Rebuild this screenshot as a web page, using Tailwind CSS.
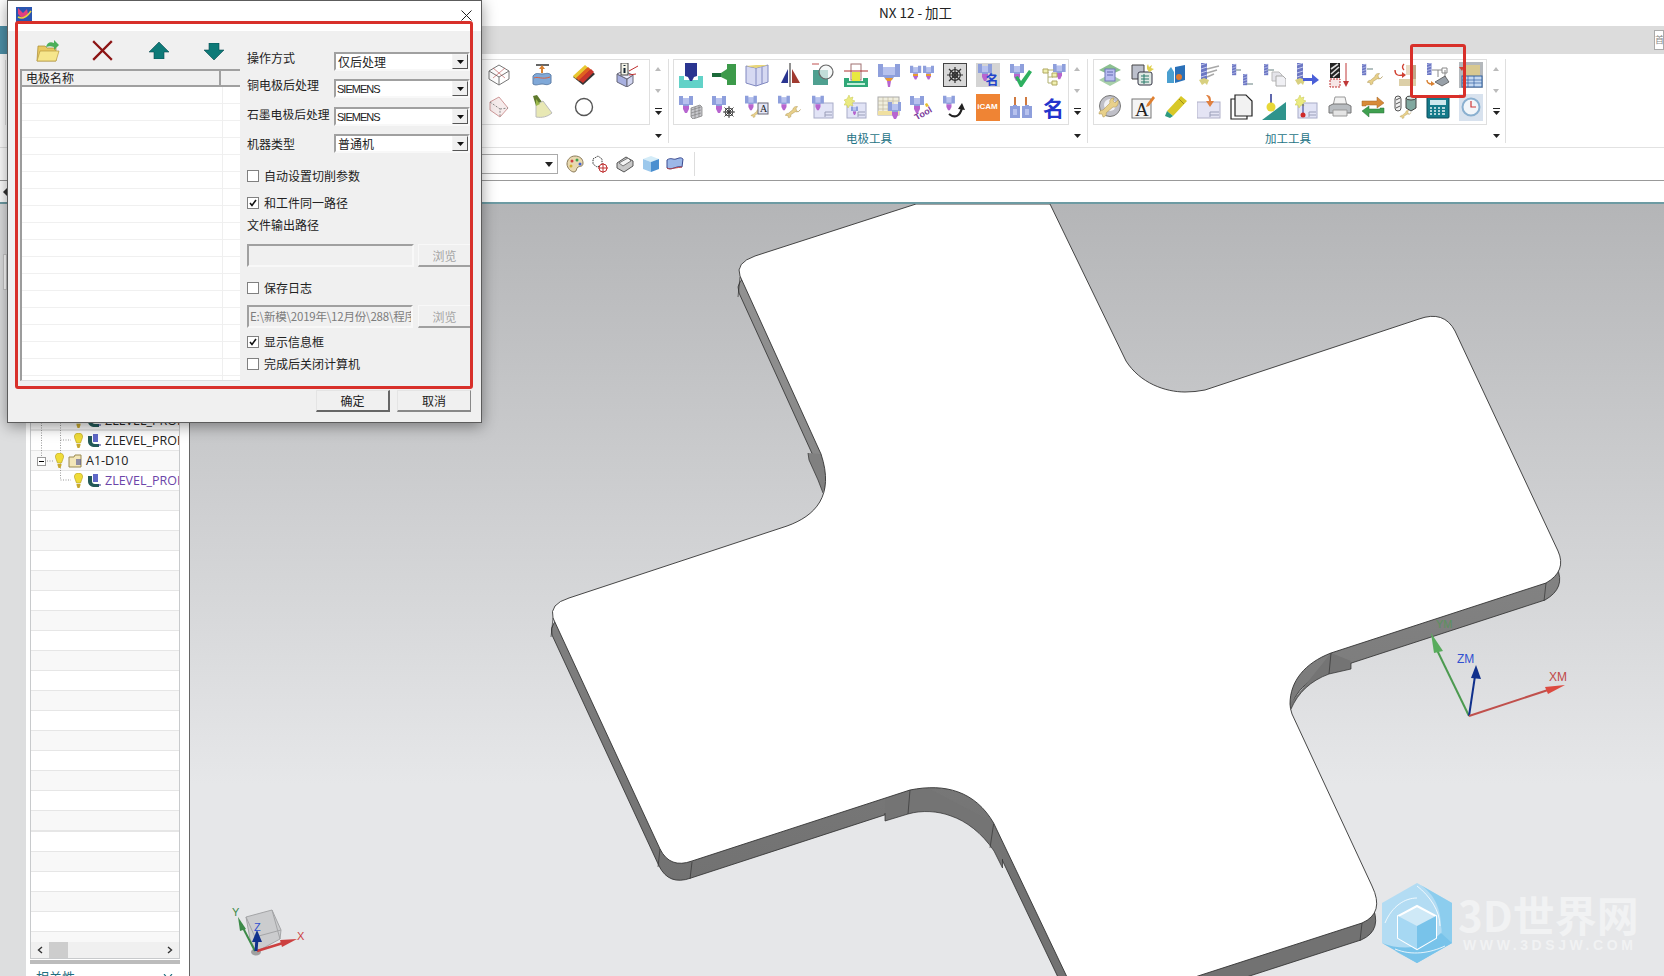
<!DOCTYPE html>
<html lang="zh">
<head>
<meta charset="utf-8">
<title>NX 12 - 加工</title>
<script src="https://cdn.jsdelivr.net/npm/@tailwindcss/browser@4"></script>
</head>
<body class="w-[1664px] h-[976px] overflow-hidden relative bg-white text-[#222] text-[12px] [font-family:'Noto_Sans_CJK_SC',sans-serif]">

<svg class="absolute w-0 h-0">
<defs>
<g id="e"><path d="M0 1h4v2h6V1h4v9h-4v1H4v-1H0z" fill="#8e9fdc"/><path d="M4 3h6v6H4z" fill="#b7c2ee"/><path d="M4 11h6v3l-2 4H6l-2-4z" fill="#b765cf"/></g>
<g id="w"><path d="M22 10l-3 3-2-1-1-3 2-3c-3-.5-6 1-6 4l-6 5c-3 0-4 2-4 3l3 0 1 3c2 0 4-1 3-4l6-4c3 1 6-1 7-3z" fill="#e8d08a" stroke="#a89050" stroke-width=".6"/></g>
<g id="web" fill="none" stroke="#333" stroke-width=".9"><path d="M0 6h12M6 0v12M1.500 1.500l9 9M10.500 1.500l-9 9"/><circle cx="6" cy="6" r="2"/><circle cx="6" cy="6" r="4"/></g>
<g id="m"><rect x="0" y="0" width="6" height="16" fill="#6d78c4"/><path d="M0 2l6-2M0 6l6-2M0 10l6-2M0 14l6-2" stroke="#c4caee" stroke-width="1"/></g>
<g id="pl"><rect x="0" y="0" width="19" height="15" fill="#e2e4f6" stroke="#a8acc8"/><path d="M11 9h7M11 12h7M11 9v5" stroke="#9a9eb8" fill="none"/></g>
<g id="up"><path d="M0 4l3-4 3 4z" fill="#bbb"/></g>
<g id="bulb"><path d="M4.500 0C7.500 0 9 2 8.500 4.500L6.500 10h-4L.5 4.500C0 2 1.500 0 4.500 0z" fill="#f0dc38" stroke="#b09a20" stroke-width=".6"/><path d="M2.500 11h4v1l-1 3h-2l-1-3z" fill="#c8a830"/></g>
<g id="op"><path d="M1 3v5c0 4 3 6 7 6h4v-3H8c-2 0-3-1-3-3V3z" fill="#235a58"/><rect x="6" y="1" width="5" height="8" fill="#5f68c8"/><path d="M11 12h3" stroke="#2a3590"/></g>
</defs>
</svg>

<!-- title bar -->
<div class="h-[26px] flex items-start justify-center pl-[167px] pt-[2px] text-[13.500px] leading-[20px] text-[#222]">NX 12 - 加工</div>
<!-- tab strip -->
<div class="h-[28px] bg-[#dcdcdc] flex justify-between">
  <div class="w-[60px] bg-[#4d90a8]"></div>
  <div class="w-[10px] h-[20px] mt-[4px] bg-white border border-[#aaa] text-[9px] leading-[18px] text-[#888] overflow-hidden">首</div>
</div>

<!-- ribbon -->
<div class="flex h-[93px] border-b border-[#e2e2e2] box-content">
  <div class="w-[440px]"></div>
  <!-- group 1 -->
  <div class="w-[210px] pt-[5px]">
    <div class="h-[66px] border border-[#dfdfdf] pl-[37px] grid grid-cols-[repeat(4,42.6px)] grid-rows-[30px_34px] place-items-center">
      <svg class="w-[24px] h-[24px]" viewBox="0 0 24 24" fill="none" stroke="#777" stroke-width="1"><path d="M12 2l10 6v8l-10 6-10-6V8z"/><path d="M2 8l10 6 10-6M12 14v8"/><path d="M6 5l12 10M18 5L6 15" stroke="#b85050" stroke-width=".6"/></svg>
      <svg class="w-[24px] h-[24px]" viewBox="0 0 24 24"><path d="M3 13c3-4 6-2 9-2s6-2 9 1l0 8c-4 3-6 1-9 1s-6 2-9 0z" fill="#7fa8d8" stroke="#5f7fa8"/><path d="M4 15c4-2 8 2 16-1" stroke="#d86040" fill="none"/><path d="M6 1h13v2H6z" fill="#666"/><path d="M12 10V4" stroke="#d88030" stroke-width="2"/><path d="M9 6l3-4 3 4z" fill="#d88030"/></svg>
      <svg class="w-[24px] h-[24px]" viewBox="0 0 24 24"><path d="M1 14L13 3l10 8-12 11z" fill="#333"/><path d="M1 13L13 2l3 2.500L4 16z" fill="#e8c830"/><path d="M4 15L16 4l3 2.500L7 18z" fill="#e06020"/><path d="M7 17L19 6l3 3L11 20z" fill="#c8342c"/></svg>
      <svg class="w-[24px] h-[24px]" viewBox="0 0 24 24"><path d="M2 11l10 5v8l-10-5z" fill="#a8b0e0" stroke="#667"/><path d="M12 16l6-4v8l-6 4z" fill="#d0d4f0" stroke="#667"/><path d="M2 11l6-3 10 4-6 4z" fill="#eef" stroke="#667"/><rect x="6" y="0" width="7" height="12" fill="#f4f4e8" stroke="#444"/><path d="M9.500 2v1M9.500 5v5" stroke="#123" stroke-width="2"/><path d="M14 8l9-5M14 12l7-1" stroke="#c03030"/></svg>
      <svg class="w-[24px] h-[24px]" viewBox="0 0 24 24" fill="none" stroke="#d09a9a" stroke-width="1"><path d="M3 7l9-5 9 11-8 9-10-7z" fill="#f6ecec"/><path d="M3 7l10 7v8M13 14l8-1" stroke-dasharray="2 1.500" stroke="#888"/></svg>
      <svg class="w-[24px] h-[24px]" viewBox="0 0 24 24"><path d="M3 1l4-1 5 7-6 4z" fill="#5f7a2c"/><path d="M6 10l7-4 9 12c-5 4-10 5-16 4z" fill="#e8e8b4" stroke="#bbb"/><path d="M6 4l4 5-4 2z" fill="#9ab84a"/></svg>
      <svg class="w-[24px] h-[24px]" viewBox="0 0 24 24" fill="none"><circle cx="12" cy="12" r="8.500" stroke="#555" stroke-width="1.400"/></svg>
    </div>
  </div>
  <div class="w-[19px] mt-[5px] h-[84px] border-r border-[#dfdfdf] flex flex-col items-center pr-[2px]">
    <svg class="w-[6px] h-[4px] mt-[8px]" viewBox="0 0 6 4"><use href="#up"/></svg>
    <svg class="w-[6px] h-[4px] mt-[18px] rotate-180" viewBox="0 0 6 4"><use href="#up"/></svg>
    <svg class="w-[7px] h-[7px] mt-[15px]" viewBox="0 0 7 7"><path d="M0 0h7v1H0zM0 3h7L3.500 7z" fill="#222"/></svg>
    <svg class="w-[7px] h-[4px] mt-[19px]" viewBox="0 0 7 4"><path d="M0 0h7L3.500 4z" fill="#222"/></svg>
  </div>

  <!-- group 2 -->
  <div class="w-[396px] ml-[4px] pt-[5px]">
    <div class="h-[66px] border border-[#dfdfdf] grid grid-cols-[repeat(12,33px)] grid-rows-[30px_34px] place-items-center">
      <svg class="w-[24px] h-[25px]" viewBox="0 0 24 25"><path d="M0 13h5v4h14v-4h5v12H0z" fill="#62d2c8"/><path d="M6 0h12v13l-3 1-2 4h-2l-2-4-3-1z" fill="#2a3590"/></svg>
      <svg class="w-[24px] h-[24px]" viewBox="0 0 24 24"><path d="M0 10h9v4H0z" fill="#1c6a3a"/><path d="M9 10l6-4V1h9v21h-9v-5l-6-3z" fill="#3c9a4a"/></svg>
      <svg class="w-[24px] h-[24px]" viewBox="0 0 24 24"><path d="M1 3l10 2 12-3v17l-12 4-10-3z" fill="#d6d9f2" stroke="#8088c0"/><path d="M1 3l10-1 12 0-12 3z" fill="#e8d678"/><path d="M11 5v18M17 4v17" stroke="#8088c0" fill="none"/></svg>
      <svg class="w-[24px] h-[24px]" viewBox="0 0 24 24"><path d="M10 6v14H3z" fill="#2a3590"/><path d="M14 6v14h8z" fill="#a03a30"/><path d="M12 0v24" stroke="#222" stroke-width="1"/></svg>
      <svg class="w-[24px] h-[24px]" viewBox="0 0 24 24"><path d="M1 1h7" stroke="#c05050"/><rect x="2" y="7" width="15" height="15" fill="#4fa090"/><circle cx="15" cy="9" r="7" fill="#f2f6f6" fill-opacity=".7" stroke="#666" stroke-width="1.200"/></svg>
      <svg class="w-[24px] h-[24px]" viewBox="0 0 24 24"><rect x="7" y="1" width="10" height="16" fill="#fff" stroke="#a07070"/><rect x="8" y="9" width="8" height="9" fill="#e8e840"/><path d="M0 8h24" stroke="#b03030"/><path d="M0 15h5v3h14v-3h5v9H0z" fill="#30a878"/><path d="M3 20h18v2H3z" fill="#c0f0d8"/></svg>
      <svg class="w-[24px] h-[24px]" viewBox="0 0 24 24"><path d="M1 1h5v3h12V1h5v13h-6l-2 3H9l-2-3H1z" fill="#8e9fdc"/><path d="M6 4h12v8H6z" fill="#b7c2ee"/><path d="M8 15h8l-2 3h-4z" fill="#e89a30"/><path d="M10 18h4l-1 6h-2z" fill="#b765cf"/></svg>
      <svg class="w-[24px] h-[24px]" viewBox="0 0 24 24"><use href="#e" transform="translate(0,2) scale(.8)"/><use href="#e" transform="translate(13,2) scale(.8)"/><path d="M3 11h5v2H3zM16 11h5v2h-5z" fill="#e89a30"/></svg>
      <div class="w-[24px] h-[24px] bg-[#d8d8d8] border border-[#444] flex items-center justify-center"><svg class="w-[16px] h-[16px]" viewBox="0 0 12 12"><use href="#web"/></svg></div>
      <div class="w-[24px] h-[24px] bg-[#d4d4d4] relative"><svg class="absolute left-[2px] top-0 w-[16px] h-[18px]" viewBox="0 0 16 18"><use href="#e"/></svg><span class="absolute left-[10px] top-[9px] text-[13px] leading-[14px] font-bold text-[#2244cc]">名</span></div>
      <svg class="w-[24px] h-[24px]" viewBox="0 0 24 24"><use href="#e" transform="translate(1,0)"/><path d="M6 14l3-1 3 5 8-11 3 2-10 15h-2z" fill="#2eb060"/></svg>
      <svg class="w-[24px] h-[24px]" viewBox="0 0 24 24"><use href="#e" transform="translate(11,0) scale(.9)"/><path d="M3 7h9M6 9v11h5M6 14h5" stroke="#b0b070" fill="none"/><path d="M1 6h5v4H1zM10 10h5v4h-5zM10 18h5v4h-5z" fill="#f0f0b0" stroke="#b0a860"/></svg>

      <svg class="w-[24px] h-[24px]" viewBox="0 0 24 24"><use href="#e"/><path d="M12 13l9-3 2 2v9l-9 3-2-2z" fill="#c8c8cc" stroke="#777" stroke-width=".7"/><path d="M12 15l10-3M12 18l10-3M12 21l10-3M16 12v11M20 11v11" stroke="#777" stroke-width=".6"/></svg>
      <svg class="w-[24px] h-[24px]" viewBox="0 0 24 24"><use href="#e"/><g transform="translate(11,11)"><use href="#web"/></g></svg>
      <svg class="w-[24px] h-[24px]" viewBox="0 0 24 24"><use href="#e" transform="scale(.85)"/><g transform="translate(5,11) scale(.55)"><use href="#w"/></g><rect x="13" y="8" width="10" height="11" fill="#e4e6f6" stroke="#667"/><text x="15" y="17" font-size="10" font-family="Liberation Serif" fill="#222">A</text></svg>
      <svg class="w-[24px] h-[24px]" viewBox="0 0 24 24"><use href="#e" transform="scale(.85)"/><g transform="translate(6,7) scale(.75)"><use href="#w"/></g></svg>
      <svg class="w-[24px] h-[24px]" viewBox="0 0 24 24"><g transform="translate(3,8)"><use href="#pl"/></g><use href="#e" transform="translate(1,0) scale(.85)"/></svg>
      <svg class="w-[24px] h-[24px]" viewBox="0 0 24 24"><g transform="translate(3,8)"><use href="#pl"/></g><path d="M5 0l1 3 3-1-1 3 3 1-3 2 1 3-3-1-2 3-1-3-3 0 2-3-2-2 3-1z" fill="#eaea80" stroke="#c8c850" stroke-width=".5"/><g transform="translate(7,11) scale(.5)"><use href="#e"/></g></svg>
      <svg class="w-[24px] h-[24px]" viewBox="0 0 24 24"><rect x="1" y="2" width="21" height="18" fill="#f0eede" stroke="#aaa"/><path d="M1 6h21M1 10h21M1 14h21M6 2v18M11 2v18M16 2v18" stroke="#c0b8a0" stroke-width=".7"/><path d="M1 16h21v4H1z" fill="#f0e0a0"/><use href="#e" transform="translate(11,6)"/></svg>
      <svg class="w-[24px] h-[24px]" viewBox="0 0 24 24"><use href="#e"/><g transform="rotate(-30 14 18)"><text x="4" y="21" font-size="9" font-weight="700" font-family="Liberation Sans" fill="#7a3a9a">Tool</text></g><path d="M15 9l2-1 2 3-3 1z" fill="#e8c030"/></svg>
      <svg class="w-[24px] h-[24px]" viewBox="0 0 24 24"><use href="#e" transform="scale(.85)"/><path d="M6 19c6 5 11 2 13-6" fill="none" stroke="#222" stroke-width="2.200"/><path d="M15 14l4-6 3 7z" fill="#222"/></svg>
      <div class="w-[24px] h-[27px] bg-[#ef8434] text-white text-[8px] font-bold flex items-center justify-center [font-family:'Liberation_Sans']">iCAM</div>
      <svg class="w-[24px] h-[24px]" viewBox="0 0 24 24"><path d="M6 2v8M17 2v8" stroke="#d07a40" stroke-width="2"/><path d="M1 11h3v-1h4v1h3v12H1zM13 11h3v-1h4v1h3v12H13z" fill="#8e9fdc"/><path d="M4 14h4v6H4zM16 14h4v6h-4z" fill="#b7c2ee"/></svg>
      <span class="text-[21px] leading-[24px] font-bold text-[#2233cc]">名</span>
    </div>
    <div class="h-[22px] text-center pr-[4px] leading-[26px] text-[#1f7486] text-[11.500px]">电极工具</div>
  </div>
  <div class="w-[19px] mt-[5px] h-[84px] border-r border-[#dfdfdf] flex flex-col items-center pr-[2px]">
    <svg class="w-[6px] h-[4px] mt-[8px]" viewBox="0 0 6 4"><use href="#up"/></svg>
    <svg class="w-[6px] h-[4px] mt-[18px] rotate-180" viewBox="0 0 6 4"><use href="#up"/></svg>
    <svg class="w-[7px] h-[7px] mt-[15px]" viewBox="0 0 7 7"><path d="M0 0h7v1H0zM0 3h7L3.500 7z" fill="#222"/></svg>
    <svg class="w-[7px] h-[4px] mt-[19px]" viewBox="0 0 7 4"><path d="M0 0h7L3.500 4z" fill="#222"/></svg>
  </div>

  <!-- group 3 -->
  <div class="w-[394px] ml-[5px] pt-[5px]">
    <div class="h-[66px] border border-[#dfdfdf] grid grid-cols-[repeat(12,32.8px)] grid-rows-[30px_34px] place-items-center">
      <svg class="w-[24px] h-[24px]" viewBox="0 0 24 24"><path d="M1 7l11-6 11 6-11 5z" fill="#8cc090"/><path d="M1 17l11-6 11 6-11 6z" fill="#a8d0a8"/><rect x="7" y="6" width="10" height="12" fill="#b9bdf0" stroke="#7078b8"/><path d="M9 9h6M9 12h6" stroke="#6068b0"/></svg>
      <svg class="w-[24px] h-[24px]" viewBox="0 0 24 24"><path d="M1 2h12v14H1z" fill="#bcc0cc" stroke="#444"/><rect x="7" y="9" width="14" height="13" rx="2" fill="#dfe8e4" stroke="#334"/><path d="M10 13h8M10 16h8M10 19h8M13 11v10" stroke="#2a7a6a"/><path d="M17 1l1 3 3-2-1 3 3 1-3 2-2 1-2-3 0-3z" fill="#e0d050"/></svg>
      <svg class="w-[24px] h-[24px]" viewBox="0 0 24 24"><path d="M3 9l4-5 3 5v11H3z" fill="#4a9fd0"/><path d="M11 4l10-2v15l-10 3z" fill="#2a70b8"/><circle cx="15" cy="14" r="3" fill="#e07a30"/></svg>
      <svg class="w-[24px] h-[24px]" viewBox="0 0 24 24"><g transform="translate(4,0)"><use href="#m"/></g><path d="M10 6l12-3M10 10l10-3M10 14l7-3" stroke="#a8a8a8" stroke-width="1.500"/><path d="M2 17l5-2 5 2-2 5-2-2-3 2z" fill="#d8d080"/></svg>
      <svg class="w-[24px] h-[24px]" viewBox="0 0 24 24"><g transform="translate(2,1) scale(.7)"><use href="#m"/></g><g transform="translate(13,11) scale(.7)"><use href="#m"/></g><path d="M6 7h5M17 21h6" stroke="#9aa" stroke-width="1.500"/></svg>
      <svg class="w-[24px] h-[24px]" viewBox="0 0 24 24"><g transform="translate(2,1) scale(.7)"><use href="#m"/></g><path d="M6 7h6" stroke="#9aa" stroke-width="1.500"/><path d="M10 9h7l3 3v6H10z" fill="#e4e4ea" stroke="#bbb"/><path d="M14 13h7l3 3v7H14z" fill="#f0f0f4" stroke="#aaa"/></svg>
      <svg class="w-[24px] h-[24px]" viewBox="0 0 24 24"><g transform="translate(2,0)"><use href="#m"/></g><path d="M0 17l5-2 5 2-2 5-2-2-3 2z" fill="#d8d080"/><path d="M8 15h9v-4l7 6-7 5v-4H8z" fill="#4a5fd8"/></svg>
      <svg class="w-[24px] h-[25px]" viewBox="0 0 24 25"><rect x="2" y="0" width="10" height="15" fill="#222"/><path d="M3 6l7-5M3 11l8-7M5 14l6-5" stroke="#ddd" stroke-width="1.600"/><rect x="2" y="16" width="10" height="8" fill="#f6e6e6" stroke="#c03030" stroke-dasharray="2 1"/><path d="M18 0v20" stroke="#c03838"/><path d="M15 18h6l-3 6z" fill="#c03838"/></svg>
      <svg class="w-[24px] h-[24px]" viewBox="0 0 24 24"><g transform="translate(1,1) scale(.7)"><use href="#m"/></g><path d="M6 6h6" stroke="#9aa" stroke-width="1.500"/><g transform="translate(5,6) scale(.75)"><use href="#w"/></g></svg>
      <svg class="w-[24px] h-[24px]" viewBox="0 0 24 24"><path d="M10 1c-2 2-2 4 0 6" stroke="#d04030" fill="none" stroke-width="1.300"/><path d="M1 7c0 5 3 6 8 5" stroke="#d04030" fill="none" stroke-width="1.400"/><path d="M8 9l4 3-4 3z" fill="#d04030"/><path d="M12 2h6v10h-6z" fill="#e8dcc4"/><path d="M5 16h17v7H5z" fill="#dccfa8"/><path d="M19 2h3v14h-3z" fill="#c0a888"/></svg>
      <svg class="w-[24px] h-[24px]" viewBox="0 0 24 24"><g transform="translate(1,0) scale(.75)"><use href="#m"/></g><path d="M6 7h10M12 7v7M19 7v8M16 5h5v5h-5z" stroke="#888" fill="none"/><path d="M1 17c0 3 2 4 5 4" stroke="#d88030" fill="none" stroke-width="1.400"/><path d="M5 18l4 3-4 2z" fill="#d88030"/><path d="M9 19l10-6 4 6-7 4z" fill="#98a0a8" stroke="#444" stroke-width=".7"/></svg>
      <svg class="w-[24px] h-[26px]" viewBox="0 0 24 26"><rect x="0" y="0" width="24" height="26" fill="#b4b8bc"/><rect x="4" y="3" width="17" height="18" fill="#d8c890"/><rect x="3" y="14" width="20" height="11" fill="#c4d8f0" stroke="#3060a0"/><path d="M3 18h20M3 21h20M9 14v11M15 14v11" stroke="#3060a0" stroke-width=".7"/><path d="M0 5l5 0-2 4z" fill="#d04030"/></svg>

      <svg class="w-[24px] h-[24px]" viewBox="0 0 24 24"><circle cx="12" cy="11" r="10.500" fill="#c0c0c8" stroke="#777"/><circle cx="12" cy="10" r="6" fill="#f0f0f4"/><path d="M20 5l-3 3-2-2 1-3c-3 0-5 2-4 5l-7 7c-3 0-4 2-4 4l3 0 1 3c2 0 4-2 3-4l7-6c4 1 6-3 5-7z" fill="#e8d08a" stroke="#a89050" stroke-width=".5"/></svg>
      <svg class="w-[24px] h-[24px]" viewBox="0 0 24 24"><rect x="1" y="4" width="19" height="19" fill="#f4f4f4" stroke="#777"/><text x="4" y="21" font-size="19" font-family="Liberation Serif" fill="#222">A</text><path d="M16 9l6-8 2 2-6 8-3 1z" fill="#e08030"/></svg>
      <svg class="w-[24px] h-[24px]" viewBox="0 0 24 24"><path d="M17 1l6 5L9 21l-6-5z" fill="#d8c828"/><path d="M3 16l6 5-3 2-5-2z" fill="#2e9a80"/><path d="M15 4l5 5" stroke="#9a8a18"/></svg>
      <svg class="w-[24px] h-[24px]" viewBox="0 0 24 24"><rect x="0" y="7" width="23" height="16" fill="#e4e4f4" stroke="#b0b0c8"/><path d="M13 17h9M13 20h9M13 17v5" stroke="#9a9eb8" fill="none"/><path d="M9 0c4 0 5 2 5 6h3l-4 6-4-6h3c0-2-1-4-3-6z" fill="#e08040"/></svg>
      <svg class="w-[24px] h-[26px]" viewBox="0 0 24 26" fill="none" stroke="#222" stroke-width="1.200"><path d="M1 5h16v20H1z" fill="#fff"/><path d="M5 1h11l6 6v15H5z" fill="#f2f2f2"/></svg>
      <svg class="w-[24px] h-[26px]" viewBox="0 0 24 26"><path d="M0 26L24 8v18z" fill="#2f948c"/><path d="M9 0v10" stroke="#2a3590" stroke-width="1.500"/><circle cx="9" cy="13" r="4.500" fill="#e8d838"/></svg>
      <svg class="w-[24px] h-[24px]" viewBox="0 0 24 24"><g transform="translate(3,8)"><use href="#pl"/></g><path d="M5 0l1 3 3-1-1 3 3 1-3 2 1 3-3-1-2 3-1-3-3 0 2-3-2-2 3-1z" fill="#eaea80" stroke="#c8c850" stroke-width=".5"/><path d="M8 9v9" stroke="#2a3590"/><circle cx="8" cy="20" r="2.500" fill="#d02828"/></svg>
      <svg class="w-[24px] h-[24px]" viewBox="0 0 24 24"><path d="M7 2h10l2 9H5z" fill="#f2f2f2" stroke="#999"/><path d="M1 11l4-2h14l4 2v7H1z" fill="#b8bcc0" stroke="#777"/><path d="M5 15h14v6H5z" fill="#e4e4e4" stroke="#999"/></svg>
      <svg class="w-[24px] h-[24px]" viewBox="0 0 24 24"><path d="M1 11V6h15V2l7 6-7 5v-3H5v1z" fill="#d88a38" stroke="#a06020" stroke-width=".5"/><path d="M23 13v5H8v4l-7-6 7-5v3h11v-1z" fill="#40a050" stroke="#2a7038" stroke-width=".5"/></svg>
      <svg class="w-[24px] h-[24px]" viewBox="0 0 24 24"><rect x="1" y="1" width="6" height="15" rx="3" fill="#f0f0f0" stroke="#555"/><path d="M2 5l4-2M2 9l4-2M2 13l4-2" stroke="#555"/><path d="M12 3h10v10l-5 3-5-3z" fill="#80a8a0" stroke="#444"/><ellipse cx="17" cy="3" rx="5" ry="2" fill="#d0e0dc" stroke="#444"/><g transform="translate(5,12) scale(.55)"><use href="#w"/></g></svg>
      <svg class="w-[24px] h-[24px]" viewBox="0 0 24 24"><rect x="1" y="2" width="22" height="21" rx="1" fill="#157a8a" stroke="#0b4a5a"/><rect x="4" y="5" width="16" height="5" fill="#cfe8ee"/><path d="M4 13h2M8 13h2M12 13h2M16 13h3M4 16h2M8 16h2M12 16h2M16 16h3M4 19h2M8 19h2M12 19h2M16 19h3" stroke="#e8f4f6" stroke-width="1.600"/></svg>
      <div class="w-[24px] h-[27px] bg-[#d8e2ee] flex items-center justify-center"><svg class="w-[20px] h-[20px]" viewBox="0 0 20 20" fill="none"><circle cx="10" cy="10" r="8.500" fill="#f2f6fa" stroke="#8ab0d0" stroke-width="2"/><path d="M10 4v6h5" stroke="#d03838" stroke-width="1.200"/></svg></div>
    </div>
    <div class="h-[22px] text-center pr-[4px] leading-[26px] text-[#1f7486] text-[11.500px]">加工工具</div>
  </div>
  <div class="w-[19px] mt-[5px] h-[84px] border-r border-[#dfdfdf] flex flex-col items-center">
    <svg class="w-[6px] h-[4px] mt-[8px]" viewBox="0 0 6 4"><use href="#up"/></svg>
    <svg class="w-[6px] h-[4px] mt-[18px] rotate-180" viewBox="0 0 6 4"><use href="#up"/></svg>
    <svg class="w-[7px] h-[7px] mt-[15px]" viewBox="0 0 7 7"><path d="M0 0h7v1H0zM0 3h7L3.500 7z" fill="#222"/></svg>
    <svg class="w-[7px] h-[4px] mt-[19px]" viewBox="0 0 7 4"><path d="M0 0h7L3.500 4z" fill="#222"/></svg>
  </div>
</div>

<!-- selection toolbar -->
<div class="h-[32px] border-b border-[#999] box-content flex items-center">
  <div class="w-[440px]"></div>
  <div class="w-[118px] h-[20px] border border-[#aaa] flex items-center justify-end pr-[4px]"><svg class="w-[8px] h-[5px]" viewBox="0 0 8 5"><path d="M0 0h8L4 5z" fill="#222"/></svg></div>
  <svg class="ml-[8px] w-[18px] h-[18px]" viewBox="0 0 18 18"><path d="M9 1c5 0 8 3 8 7s-3 3-5 4-1 5-4 5-7-4-7-8 3-8 8-8z" fill="#e8d8b0" stroke="#8a7a58"/><circle cx="6" cy="6" r="1.500" fill="#d04040"/><circle cx="11" cy="5" r="1.500" fill="#40a050"/><circle cx="14" cy="9" r="1.500" fill="#4060d0"/><circle cx="5" cy="11" r="1.500" fill="#d0b030"/></svg>
  <svg class="ml-[7px] w-[18px] h-[18px]" viewBox="0 0 18 18" fill="none"><path d="M2 4l5-3 4 3v6l-5 2-4-3z" stroke="#333" stroke-dasharray="1.500 1"/><circle cx="12" cy="13" r="4" stroke="#c03030" fill="#fff"/><path d="M7 13h10M12 8v10" stroke="#c03030"/></svg>
  <svg class="ml-[7px] w-[18px] h-[18px]" viewBox="0 0 18 18"><path d="M1 8l9-6 7 4v5l-9 6-7-4z" fill="#c8c8c8" stroke="#555"/><path d="M3 8l9-5 3 3-8 5z" fill="#f4f4f4" stroke="#777"/></svg>
  <svg class="ml-[8px] w-[18px] h-[18px]" viewBox="0 0 18 18"><path d="M1 4l8-3 8 3-8 3z" fill="#d4ecf8"/><path d="M1 4l8 3v10l-8-3z" fill="#9cc8ec"/><path d="M17 4L9 7v10l8-3z" fill="#4a8fd0"/></svg>
  <svg class="ml-[6px] w-[18px] h-[18px]" viewBox="0 0 18 18"><path d="M1 5c4-3 6 0 9-1s5-2 7 0l-1 8c-3-1-5 0-8 1s-5 1-7 0z" fill="#9cb8e8" stroke="#3a4a90"/><path d="M1 13c3 2 6 0 8 0s5-1 7-1" stroke="#c04040" fill="none"/></svg>
  <div class="ml-[10px] w-px h-[24px] bg-[#ddd]"></div>
</div>
<div class="h-[21px]"></div>
<div class="h-[2px] bg-[#6d9ba3]"></div>

<!-- main area -->
<div class="flex h-[773px]">
  <!-- navigator panel -->
  <div class="w-[26px] bg-[#dddedf] shrink-0"></div>
  <div class="w-[164px] shrink-0 bg-white border-r border-[#666] pt-[6px] pl-[4px] overflow-hidden">
    <div class="w-[150px] h-[749px] border-x border-b border-[#c8cacc] flex flex-col overflow-hidden">
      <div class="flex-1 relative pt-[201px] bg-[repeating-linear-gradient(to_bottom,#f8f8f8_0,#f8f8f8_19px,#e6e6e6_19px,#e6e6e6_20.050px,#fff_20.050px,#fff_39.100px,#e6e6e6_39.100px,#e6e6e6_40.100px)] [font-family:'Open_Sans',sans-serif] text-[12.500px] overflow-hidden">
        <svg class="absolute left-0 top-[200px] w-[40px] h-[90px]" viewBox="0 0 40 90" fill="none" stroke="#999" stroke-dasharray="1 1.500"><path d="M10.500 0V46M29.500 0V70M29.500 30H40M29.500 70H40M16 51H22"/></svg>
        <div class="h-[20.050px] flex items-center pl-[43px] text-[#222] whitespace-nowrap overflow-hidden relative">
          <svg class="w-[9px] h-[16px] shrink-0" viewBox="0 0 9 16"><use href="#bulb"/></svg>
          <svg class="w-[15px] h-[16px] shrink-0 ml-[4px]" viewBox="0 0 15 16"><use href="#op"/></svg>
          <span class="ml-[3px]">ZLEVEL_PROFILE</span>
        </div>
        <div class="h-[20.050px] flex items-center pl-[43px] whitespace-nowrap overflow-hidden relative">
          <svg class="w-[9px] h-[16px] shrink-0" viewBox="0 0 9 16"><use href="#bulb"/></svg>
          <svg class="w-[15px] h-[16px] shrink-0 ml-[4px]" viewBox="0 0 15 16"><use href="#op"/></svg>
          <span class="ml-[3px]">ZLEVEL_PROFILE</span>
        </div>
        <div class="h-[20.050px] flex items-center pl-[6px] whitespace-nowrap overflow-hidden relative">
          <div class="w-[9px] h-[9px] border border-[#999] bg-white flex items-center justify-center shrink-0"><div class="w-[5px] h-px bg-black"></div></div>
          <svg class="w-[9px] h-[16px] shrink-0 ml-[9px]" viewBox="0 0 9 16"><use href="#bulb"/></svg>
          <svg class="w-[15px] h-[14px] shrink-0 ml-[4px]" viewBox="0 0 15 14"><path d="M1 3h5l1-2h6v12H1z" fill="#f2e6b8" stroke="#9a8a50"/><path d="M8 6h5M8 8h5M8 10h5" stroke="#2a3590"/></svg>
          <span class="ml-[3px] text-[#222]">A1-D10</span>
        </div>
        <div class="h-[20.050px] flex items-center pl-[43px] whitespace-nowrap overflow-hidden relative">
          <svg class="w-[9px] h-[16px] shrink-0" viewBox="0 0 9 16"><use href="#bulb"/></svg>
          <svg class="w-[15px] h-[16px] shrink-0 ml-[4px]" viewBox="0 0 15 16"><use href="#op"/></svg>
          <span class="ml-[3px] text-[#6b45a8]">ZLEVEL_PROFILE</span>
        </div>
      </div>
      <div class="h-[16px] bg-[#f0f0f0] flex items-center justify-between px-[6px] shrink-0 relative">
        <svg class="w-[6px] h-[8px]" viewBox="0 0 6 8" fill="none" stroke="#333" stroke-width="1.400"><path d="M5 1L1.500 4 5 7"/></svg>
        <div class="absolute left-[18px] top-0 w-[19px] h-full bg-[#cdcdcd]"></div>
        <svg class="w-[6px] h-[8px]" viewBox="0 0 6 8" fill="none" stroke="#333" stroke-width="1.400"><path d="M1 1l3.500 3L1 7"/></svg>
      </div>
    </div>
    <div class="w-[150px] h-[4px] mt-[1px] bg-[#bcbcbc]"></div>
    <div class="flex items-center justify-between w-[148px] pl-[6px] pr-[5px] mt-[3px] text-[13px] text-[#1f6f80]"><span>相关性</span><svg class="w-[10px] h-[6px]" viewBox="0 0 10 6" fill="none" stroke="#1f6f80" stroke-width="1.200"><path d="M1 0l4 5 4-5"/></svg></div>
  </div>

  <!-- graphics window -->
  <div class="flex-1 bg-[linear-gradient(to_bottom,#b4b5b7_0%,#e6e7e9_75%,#e6e7e9_100%)] overflow-hidden">
    <svg class="w-[1474px] h-[773px] block" viewBox="190 203 1474 773" fill="none">
      <defs>
        <linearGradient id="wall" gradientUnits="userSpaceOnUse" x1="0" y1="260" x2="0" y2="860"><stop offset="0" stop-color="#929292"/><stop offset="1" stop-color="#727272"/></linearGradient>
        <path id="top" d="M916 203L1050 203L1126 360C1140 382 1165 391 1185 391Q1195 391 1205 389L1419 318Q1444 309 1455 330L1558 550Q1567 570 1546 582L1331 652C1305 662 1290 680 1290 703Q1290 707 1292 713L1372 885Q1385 912 1362 922L1198 975L1195 976L1067 976L993.600 822C975 790 945 782 910 789L692 860Q670 868 660 848L553 617Q549 603 569 597L787 525C815 515 835 495 821 453L740 275Q735 262 755 255Z"/>
      </defs>
      <!-- walls -->
      <use href="#top" transform="translate(-1,17)" fill="url(#wall)" stroke="#2c2c2c" stroke-width=".8"/>
      <path d="M885 796L885 820L908 813C922 809 938 810 951 815C966 820 982 832 994 850L1002.500 867L1002.500 858L994 822L926 786Z" fill="#747474"/>
      <path d="M885 812L885 820L908 813C922 809 938 810 951 815C966 820 982 832 994 850L1002.500 867L1002.500 858" stroke="#2c2c2c" stroke-width=".7"/>
      <path d="M808 452L809 459L818 479L823 492L827 473L821 453Z" fill="#808080"/>
      <path d="M808 452L809 459L818 479L823 492" stroke="#2c2c2c" stroke-width=".7"/>
      <path d="M1351 660L1351 668L1329 673C1310 680 1298 692 1291 708L1290 703L1331 652Z" fill="#747474"/>
      <path d="M1351 662L1351 668L1329 673C1310 680 1298 692 1291 708" stroke="#2c2c2c" stroke-width=".7"/>
      <!-- top face -->
      <use href="#top" fill="#fff" stroke="#333" stroke-width=".9"/>
      <!-- seams -->
      <path d="M692 861L690 878M660 848L658 866M910 789L908 813M993.600 823L990 847M1331 652L1329 673M1546 582L1544 600M1362 922L1360 940M553 617L551 636M740 276L738 296" stroke="#333" stroke-width=".7"/>

      <!-- WCS triad -->
      <path d="M1469 715L1436 647" stroke="#4c9a50" stroke-width="2"/>
      <path d="M1431 632L1443 650 1434 652Z" fill="#58ac5c"/>
      <path d="M1469 715L1475 675" stroke="#10308c" stroke-width="2"/>
      <path d="M1476 664L1481 678 1471 677Z" fill="#10308c"/>
      <path d="M1469 715L1548 689" stroke="#c0504c" stroke-width="2"/>
      <path d="M1565 684L1548 693 1545 686Z" fill="#dc4a40"/>
      <text x="1436" y="627" font-size="11" font-family="Liberation Sans" fill="#4c9a50" opacity=".7">YM</text>
      <text x="1457" y="662" font-size="12" font-family="Liberation Sans" fill="#3050d0">ZM</text>
      <text x="1549" y="680" font-size="12" font-family="Liberation Sans" fill="#c04848">XM</text>

      <!-- view triad -->
      <path d="M246 916L272 909 281 929 280 938 256 951 250 938Z" fill="#cbccce" stroke="#a4a5a7"/>
      <path d="M246 916L255 936 281 929M255 936L256 951M272 909L280 938" stroke="#a4a5a7"/>
      <ellipse cx="256" cy="951" rx="5" ry="3.500" fill="#a0a0a0"/>
      <path d="M255 950L241 923" stroke="#3c8a48" stroke-width="2"/>
      <path d="M238 916L246 928 240 930Z" fill="#3c8a48"/>
      <path d="M257 950L283 942" stroke="#cc4040" stroke-width="2.500"/>
      <path d="M297 938L282 946 280 939Z" fill="#cc4040"/>
      <path d="M256 950L257 938" stroke="#10308c" stroke-width="3"/>
      <path d="M257 929L262 941 252 941Z" fill="#10308c"/>
      <text x="232" y="915" font-size="11" font-family="Liberation Sans" fill="#3c8a48">Y</text>
      <text x="297" y="939" font-size="11" font-family="Liberation Sans" fill="#cc4040">X</text>
      <text x="254" y="930" font-size="11" font-family="Liberation Sans" fill="#3050d0">Z</text>

      <!-- watermark -->
      <path d="M1417 882L1452 902V942L1417 962L1382 942V902Z" fill="#b3dcf3"/>
      <path d="M1417 882L1452 902V942L1417 962L1395 950C1420 958 1446 945 1441 925C1441 905 1432 890 1417 882Z" fill="#8ccdee"/>
      <path d="M1382 942L1417 962L1452 942L1441 932C1425 948 1402 950 1382 942Z" fill="#78c3ea"/>
      <path d="M1417 905L1436 915V937L1417 948L1398 937V915Z" fill="#cfe9f7" stroke="#fff" stroke-width="2"/>
      <path d="M1417 925L1436 915V937L1417 948Z" fill="#78c3ea"/>
      <path d="M1417 925L1398 915V937L1417 948Z" fill="#a6d8f3"/>
      <path d="M1417 885C1430 895 1440 910 1440 925M1385 922C1392 905 1405 897 1417 897M1395 948C1412 955 1430 952 1445 945" stroke="#fff" stroke-opacity=".8"/>
      <text x="1458" y="931" font-size="42" font-weight="700" fill="#f1f2f3" font-family="'Noto Sans CJK SC'">3D世界网</text>
      <text x="1463" y="949" font-size="14" font-weight="700" letter-spacing="3.600" fill="#f1f2f3" font-family="'Liberation Sans'">WWW.3DSJW.COM</text>
    </svg>
  </div>
</div>

<!-- slivers of the sheet left of the dialog -->
<div class="absolute left-[3px] top-[254px] w-[4px] h-[36px] border border-[#c8c8c8] bg-white"></div>
<div class="absolute left-[5px] top-[60px] w-[2px] h-[65px] border-l border-[#dfdfdf]"></div>
<svg class="absolute left-[3px] top-[188px] w-[4px] h-[8px]" viewBox="0 0 4 8"><path d="M4 0v8L0 4z" fill="#333"/></svg>

<!-- dialog window -->
<div class="absolute left-[7px] top-0 w-[475px] h-[423px] bg-[#f0f0f0] border border-[#5c5c5c] shadow-[0_3px_14px_rgba(0,0,0,0.4)] flex flex-col">
  <div class="h-[30px] bg-white flex justify-between shrink-0">
    <svg class="w-[16px] h-[15px] ml-[8px] mt-[6px]" viewBox="0 0 16 15"><rect width="16" height="15" fill="#2a55b0"/><path d="M2 1l5 5 4-4 1 5-5 5-5-5z" fill="#e04080"/><path d="M2 10c4 2 9 0 13-6" stroke="#e8d040" stroke-width="1.500" fill="none"/></svg>
    <svg class="w-[11px] h-[11px] mr-[9px] mt-[9px]" viewBox="0 0 11 11" stroke="#222" stroke-width="1"><path d="M.5.5l10 10M10.500.5l-10 10"/></svg>
  </div>
  <div class="h-[360px] flex shrink-0">
    <!-- list side -->
    <div class="ml-[12px] w-[220px]">
      <div class="h-[38px] relative">
        <svg class="absolute left-[16px] top-[9px] w-[24px] h-[23px]" viewBox="0 0 24 23"><path d="M2 6h7l2 2h9v13H1z" fill="#e8c860" stroke="#a88a30" stroke-width=".7"/><path d="M1 21l3-10h19l-3 10z" fill="#f6e68c" stroke="#b89a40" stroke-width=".7"/><path d="M10 7c1-4 4-6 8-4V0l5 5-5 5V7c-3-1-5-1-8 0z" fill="#4aaf5a"/></svg>
        <svg class="absolute left-[72px] top-[9px] w-[21px] h-[21px]" viewBox="0 0 21 21" stroke="#8c1414" stroke-width="2.300" stroke-linecap="square"><path d="M2 2l17 17M19 2L2 19"/></svg>
        <svg class="absolute left-[129px] top-[11px] w-[20px] h-[17px]" viewBox="0 0 20 17"><path d="M10 0l10 10h-5v7H5v-7H0z" fill="#0e7a78" stroke="#0a4a50" stroke-width=".6"/></svg>
        <svg class="absolute left-[184px] top-[12px] w-[20px] h-[17px]" viewBox="0 0 20 17"><path d="M10 17L0 7h5V0h10v7h5z" fill="#0e7a78" stroke="#0a4a50" stroke-width=".6"/></svg>
      </div>
      <div class="h-[312px] border-l-2 border-b border-[#9c9c9c] border-b-[#dcdcdc] flex flex-col">
        <div class="h-[18px] shrink-0 border-t-2 border-b-2 border-[#a0a0a0] bg-[#f0f0f0] flex">
          <div class="w-[199px] border-r-2 border-[#a0a0a0] pl-[4px] leading-[14px]">电极名称</div>
        </div>
        <div class="flex-1 relative bg-[repeating-linear-gradient(to_bottom,#fff_0,#fff_16px,#f0f0f0_16px,#f0f0f0_17px)]">
          <div class="absolute left-[200px] top-0 bottom-0 w-px bg-[#efefef]"></div>
        </div>
      </div>
    </div>
    <!-- options side -->
    <div class="ml-[7px] w-[224px] pt-[21px] flex flex-col">
      <div class="flex h-[19px]"><span class="w-[87px] leading-[11px]">操作方式</span>
        <div class="w-[136px] border-2 border-[#a0a0a0] border-r-[#f8f8f8] border-b-[#f8f8f8] bg-white flex justify-between"><span class="pl-[2px] leading-[15px]">仅后处理</span><div class="w-[16px] border border-[#f4f4f4] border-r-[#555] border-b-[#555] bg-[#f0f0f0] flex items-center justify-center"><svg class="w-[7px] h-[4px]" viewBox="0 0 7 4"><path d="M0 0h7L3.500 4z" fill="#111"/></svg></div></div>
      </div>
      <div class="flex h-[19px] mt-[8px]"><span class="w-[87px] leading-[11px]">铜电极后处理</span>
        <div class="w-[136px] border-2 border-[#a0a0a0] border-r-[#f8f8f8] border-b-[#f8f8f8] bg-white flex justify-between"><span class="pl-[1px] leading-[16px] text-[11px] tracking-[-1px] [font-family:'Liberation_Sans']">SIEMENS</span><div class="w-[16px] border border-[#f4f4f4] border-r-[#555] border-b-[#555] bg-[#f0f0f0] flex items-center justify-center"><svg class="w-[7px] h-[4px]" viewBox="0 0 7 4"><path d="M0 0h7L3.500 4z" fill="#111"/></svg></div></div>
      </div>
      <div class="flex h-[19px] mt-[9px]"><span class="w-[87px] leading-[13px] whitespace-nowrap text-[11.800px]">石墨电极后处理</span>
        <div class="w-[136px] border-2 border-[#a0a0a0] border-r-[#f8f8f8] border-b-[#f8f8f8] bg-white flex justify-between"><span class="pl-[1px] leading-[16px] text-[11px] tracking-[-1px] [font-family:'Liberation_Sans']">SIEMENS</span><div class="w-[16px] border border-[#f4f4f4] border-r-[#555] border-b-[#555] bg-[#f0f0f0] flex items-center justify-center"><svg class="w-[7px] h-[4px]" viewBox="0 0 7 4"><path d="M0 0h7L3.500 4z" fill="#111"/></svg></div></div>
      </div>
      <div class="flex h-[19px] mt-[8px]"><span class="w-[87px] leading-[20px]">机器类型</span>
        <div class="w-[136px] border-2 border-[#a0a0a0] border-r-[#f8f8f8] border-b-[#f8f8f8] bg-white flex justify-between"><span class="pl-[2px] leading-[15px]">普通机</span><div class="w-[16px] border border-[#f4f4f4] border-r-[#555] border-b-[#555] bg-[#f0f0f0] flex items-center justify-center"><svg class="w-[7px] h-[4px]" viewBox="0 0 7 4"><path d="M0 0h7L3.500 4z" fill="#111"/></svg></div></div>
      </div>
      <div class="flex items-center h-[14px] mt-[16px]"><div class="w-[12px] h-[12px] border border-[#808080] bg-white"></div><span class="ml-[5px]">自动设置切削参数</span></div>
      <div class="flex items-center h-[14px] mt-[13px]"><div class="w-[12px] h-[12px] border border-[#808080] bg-white flex items-center justify-center"><svg class="w-[8px] h-[8px]" viewBox="0 0 8 8" fill="none" stroke="#111" stroke-width="1.600"><path d="M1 4l2 2.500L7 1"/></svg></div><span class="ml-[5px]">和工件同一路径</span></div>
      <div class="h-[14px] leading-[14px] mt-[8px]">文件输出路径</div>
      <div class="flex h-[23px] mt-[12px]">
        <div class="w-[167px] border-2 border-[#a0a0a0] border-r-[#f8f8f8] border-b-[#f8f8f8] bg-[#f0f0f0]"></div>
        <div class="w-[53px] ml-[4px] border border-[#f8f8f8] border-r-[#a0a0a0] border-b-2 border-b-[#a0a0a0] text-center text-[#a4a4a4] leading-[21px]">浏览</div>
      </div>
      <div class="flex items-center h-[14px] mt-[14px]"><div class="w-[12px] h-[12px] border border-[#808080] bg-white"></div><span class="ml-[5px]">保存日志</span></div>
      <div class="flex h-[23px] mt-[10px]">
        <div class="w-[166px] border-2 border-[#a0a0a0] border-r-[#f8f8f8] border-b-[#f8f8f8] bg-[#f0f0f0] overflow-hidden whitespace-nowrap text-[#7c7c7c] leading-[19px] text-[11.500px] pl-[1px] tracking-[-0.200px]">E:\新模\2019年\12月份\288\程序</div>
        <div class="w-[53px] ml-[5px] border border-[#f8f8f8] border-r-[#a0a0a0] border-b-2 border-b-[#a0a0a0] text-center text-[#a4a4a4] leading-[21px]">浏览</div>
      </div>
      <div class="flex items-center h-[14px] mt-[7px]"><div class="w-[12px] h-[12px] border border-[#808080] bg-white flex items-center justify-center"><svg class="w-[8px] h-[8px]" viewBox="0 0 8 8" fill="none" stroke="#111" stroke-width="1.600"><path d="M1 4l2 2.500L7 1"/></svg></div><span class="ml-[5px]">显示信息框</span></div>
      <div class="flex items-center h-[14px] mt-[8px]"><div class="w-[12px] h-[12px] border border-[#808080] bg-white"></div><span class="ml-[5px]">完成后关闭计算机</span></div>
    </div>
  </div>
  <div class="flex justify-end gap-[7px] pr-[10px] -mt-[1px]">
    <div class="w-[74px] h-[22px] border border-[#e4e4e4] border-r-2 border-b-2 border-r-[#666] border-b-[#666] text-center leading-[20px]">确定</div>
    <div class="w-[74px] h-[22px] border border-[#e4e4e4] border-r-[#888] border-b-2 border-b-[#888] text-center leading-[20px]">取消</div>
  </div>
</div>

<!-- red annotation rectangles -->
<div class="absolute left-[15px] top-[21px] w-[458px] h-[368px] border-[3px] border-[#d8302a] rounded-[3px]"></div>
<div class="absolute left-[1410px] top-[44px] w-[56px] h-[54px] border-[3px] border-[#d8302a] rounded-[3px]"></div>

</body>
</html>
